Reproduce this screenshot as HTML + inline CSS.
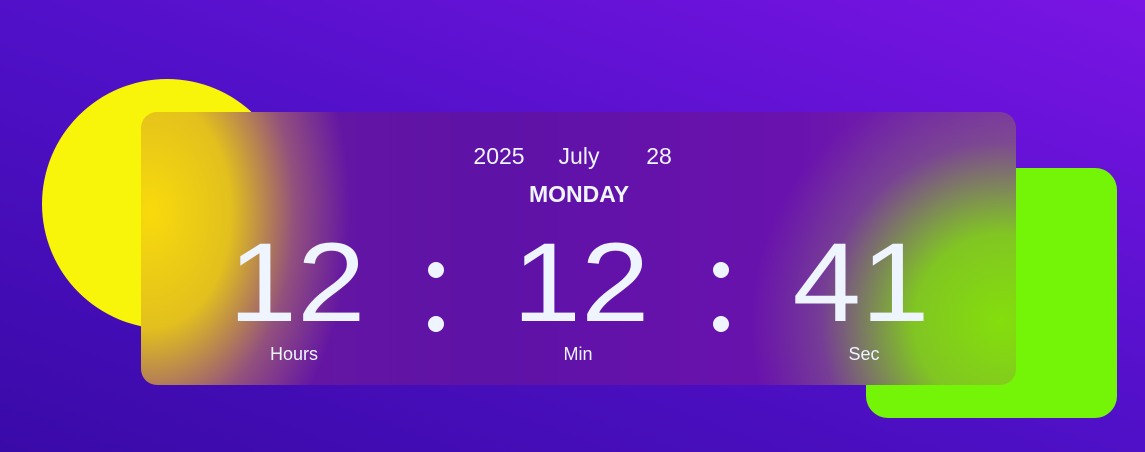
<!DOCTYPE html>
<html><head><style>
html,body{margin:0;padding:0}
body{width:1145px;height:452px;overflow:hidden;position:relative;font-family:"Liberation Sans",Arial,sans-serif;
background:linear-gradient(20deg,#3a0aa8 0%,#5010c8 50%,#7a14e4 100%);}
.circle{position:absolute;left:42px;top:79px;width:250px;height:250px;border-radius:50%;background:#f8f50a}
.sq{position:absolute;left:866px;top:168px;width:251px;height:250px;border-radius:22px;background:#74f508}
.card{position:absolute;left:141px;top:112px;width:875px;height:273px;border-radius:16px;overflow:hidden;
background:
radial-gradient(ellipse 200px 290px at 10px 100px, rgba(248,218,12,1) 0%, rgba(240,210,15,0.9) 40%, rgba(200,150,80,0.45) 72%, rgba(200,150,80,0) 100%),
radial-gradient(ellipse 250px 250px at 860px 210px, rgba(132,222,12,1) 0%, rgba(130,215,20,0.9) 35%, rgba(130,110,120,0.45) 72%, rgba(130,100,130,0) 100%),
linear-gradient(90deg,#6a1aa0 0%,#5e12a6 40%,#6a12ae 75%,#7a2aa8 100%);}
.t{position:absolute;color:#eef5ff;white-space:nowrap;transform:translateX(-50%)}
.d{font-size:23px;top:143px}
.big{font-size:112px;top:227px;line-height:1;transform:translateX(-50%) scaleX(1.1)}
.dot{position:absolute;width:16px;height:16px;border-radius:50%;background:#eef5ff}
.lbl{font-size:18px;top:344px}
</style></head><body>
<div class="circle"></div>
<div class="sq"></div>
<div class="card"></div>
<div class="t d" style="left:499px">2025</div>
<div class="t d" style="left:579px">July</div>
<div class="t d" style="left:659px">28</div>
<div class="t" style="left:579px;top:181px;font-size:23px;font-weight:bold">MONDAY</div>
<div class="t big" style="left:297px">12</div>
<div class="dot" style="left:428px;top:262px"></div>
<div class="dot" style="left:428px;top:316px"></div>
<div class="t big" style="left:581px">12</div>
<div class="dot" style="left:713px;top:262px"></div>
<div class="dot" style="left:713px;top:316px"></div>
<div class="t big" style="left:861px">41</div>
<div class="t lbl" style="left:294px">Hours</div>
<div class="t lbl" style="left:578px">Min</div>
<div class="t lbl" style="left:864px">Sec</div>
</body></html>
